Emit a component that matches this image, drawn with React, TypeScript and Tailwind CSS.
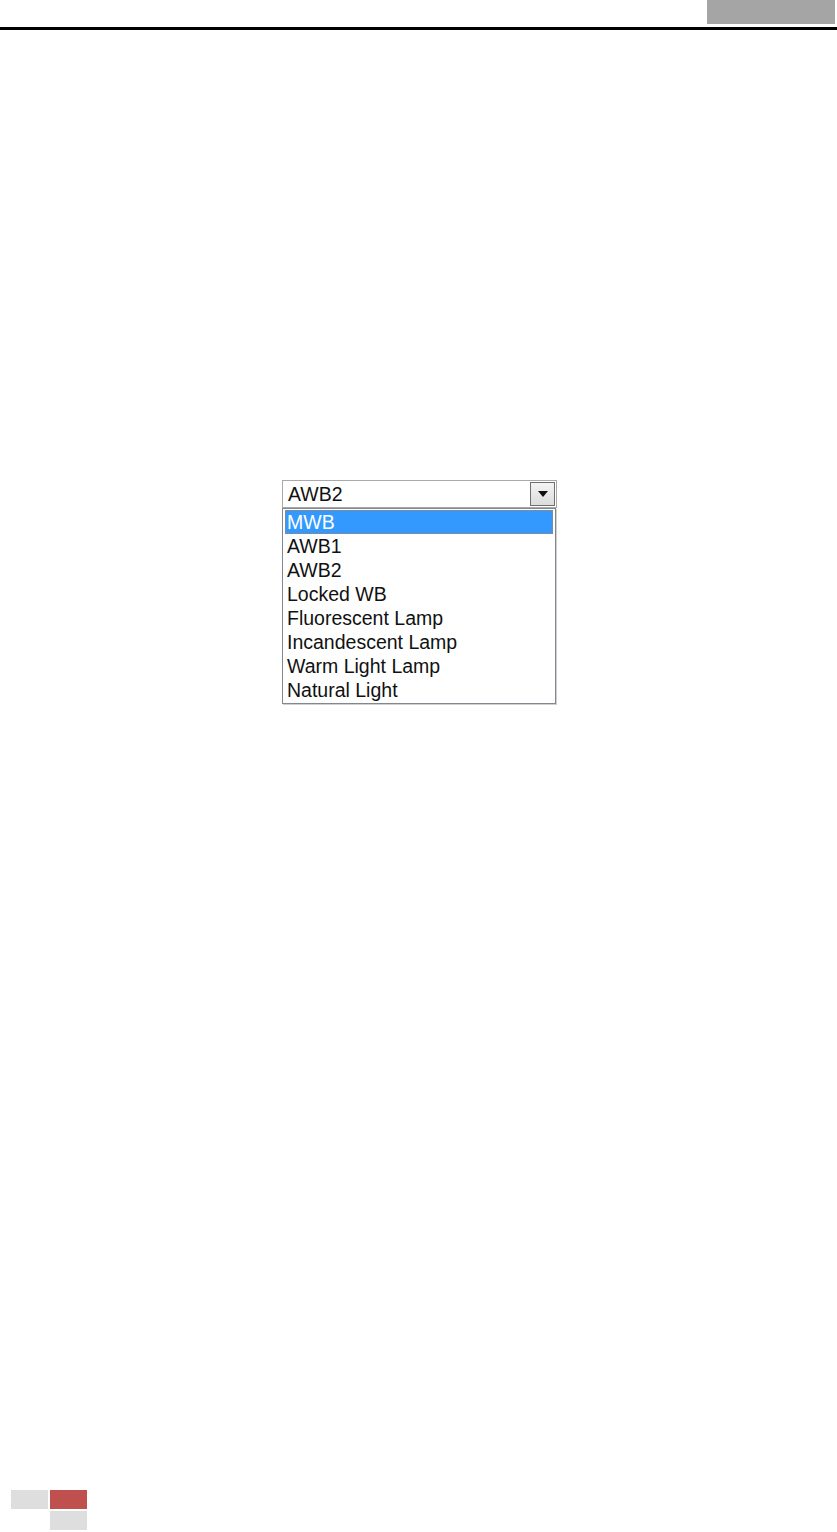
const options = [
  "MWB",
  "AWB1",
  "AWB2",
  "Locked WB",
  "Fluorescent Lamp",
  "Incandescent Lamp",
  "Warm Light Lamp",
  "Natural Light",
];

const WbSelect = () => {
  return (
    <div className="w-[275px] ml-[282px] font-['Liberation_Sans',Arial,sans-serif] text-[#111]">
      {/* closed select */}
      <div className="flex h-[28px] border border-[#a9a9a9] bg-white">
        <div className="flex-1 pl-[5px] text-[19.5px] leading-[27px]">AWB2</div>
        <div className="w-[25px] m-[1px] flex items-center justify-center border border-[#707070] bg-gradient-to-b from-[#f4f4f4] to-[#dcdcdc]">
          <svg width="10" height="6" viewBox="0 0 10 6">
            <path d="M0 0h10L5 6z" fill="#111" />
          </svg>
        </div>
      </div>
      {/* opened list */}
      <div className="w-[274px] border border-[#828790] shadow-[1px_1px_0_#d0d0d0] bg-white pt-[1px] pb-[1px] px-[2px]">
        {options.map((o, i) => (
          <div
            key={o}
            className={
              i === 0
                ? "h-[24px] pl-[1px] text-[19.5px] leading-[23px] bg-[#3399ff] text-white border border-dotted border-[#c08040]"
                : "h-[24px] pl-[2px] text-[19.5px] leading-[25px]"
            }
          >
            {o}
          </div>
        ))}
      </div>
    </div>
  );
};

const App = () => {
  return (
    <main className="w-[837px] h-[1532px] bg-white flex flex-col">
      <div className="flex justify-end pr-[2px]">
        <div className="w-[128px] h-[24px] bg-[#a5a5a5]" />
      </div>
      <div className="h-[3px] mt-[3px] bg-black" />
      <div className="mt-[450px]">
        <WbSelect />
      </div>
      <footer className="mt-auto mb-[2px] ml-[11px] flex flex-col gap-[2px]">
        <div className="flex gap-[2px]">
          <div className="w-[37px] h-[19px] bg-[#dedede]" />
          <div className="w-[37px] h-[19px] bg-[#c0504d]" />
        </div>
        <div className="flex gap-[2px]">
          <div className="w-[37px] h-[19px]" />
          <div className="w-[37px] h-[19px] bg-[#dedede]" />
        </div>
      </footer>
    </main>
  );
};

export default App;
